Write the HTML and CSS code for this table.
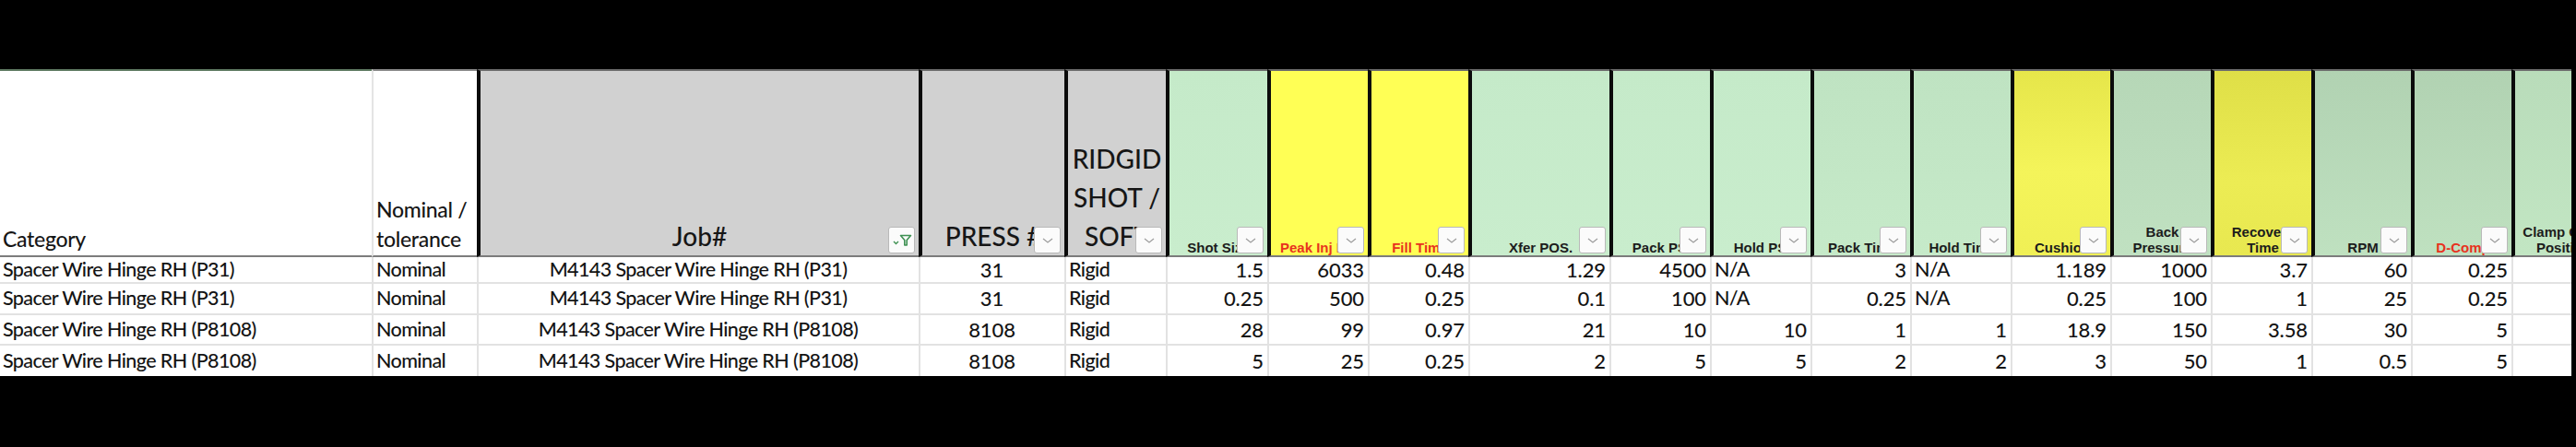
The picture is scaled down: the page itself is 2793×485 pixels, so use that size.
FILE: index.html
```html
<!DOCTYPE html>
<html lang="en">
<head>
<meta charset="utf-8">
<title>Process sheet</title>
<link rel="stylesheet" href="styles.css">
</head>
<body>
<div class="sheet">
  <div class="grid">
    <!-- header row -->
    <div class="h white cat"><span class="t23">Category</span></div>
    <div class="h white nom"><span class="t23">Nominal /<br>tolerance</span></div>
    <div class="h col gray"><span class="big">Job#</span>
      <span class="dd"><svg width="24" height="16" viewBox="0 0 24 16"><polyline points="3,9 5.5,11.5 8,9" fill="none" stroke="#3f9153" stroke-width="1.4"/><path d="M10.5 2.5 H21.5 L17.2 7.5 V13 H14.8 V7.5 Z" fill="none" stroke="#3f9153" stroke-width="1.6" stroke-linejoin="round"/></svg></span></div>
    <div class="h col gray"><span class="big">PRESS #</span><span class="dd"><svg class="chev" width="12" height="6" viewBox="0 0 12 6"><polyline points="1,1 6,5 11,1"/></svg></span></div>
    <div class="h col gray"><span class="big">RIDGID<br>SHOT /<br>SOFT</span><span class="dd"><svg class="chev" width="12" height="6" viewBox="0 0 12 6"><polyline points="1,1 6,5 11,1"/></svg></span></div>
    <div class="h col gA"><span class="lbl">Shot Size</span><span class="dd"><svg class="chev" width="12" height="6" viewBox="0 0 12 6"><polyline points="1,1 6,5 11,1"/></svg></span></div>
    <div class="h col yA"><span class="lbl red">Peak Inj PSI</span><span class="dd"><svg class="chev" width="12" height="6" viewBox="0 0 12 6"><polyline points="1,1 6,5 11,1"/></svg></span></div>
    <div class="h col yA"><span class="lbl red">Fill Time</span><span class="dd"><svg class="chev" width="12" height="6" viewBox="0 0 12 6"><polyline points="1,1 6,5 11,1"/></svg></span></div>
    <div class="h col gA"><span class="lbl">Xfer POS.</span><span class="dd"><svg class="chev" width="12" height="6" viewBox="0 0 12 6"><polyline points="1,1 6,5 11,1"/></svg></span></div>
    <div class="h col gA"><span class="lbl">Pack PSI</span><span class="dd"><svg class="chev" width="12" height="6" viewBox="0 0 12 6"><polyline points="1,1 6,5 11,1"/></svg></span></div>
    <div class="h col gA"><span class="lbl">Hold PSI</span><span class="dd"><svg class="chev" width="12" height="6" viewBox="0 0 12 6"><polyline points="1,1 6,5 11,1"/></svg></span></div>
    <div class="h col gB"><span class="lbl">Pack Time</span><span class="dd"><svg class="chev" width="12" height="6" viewBox="0 0 12 6"><polyline points="1,1 6,5 11,1"/></svg></span></div>
    <div class="h col gB"><span class="lbl">Hold Time</span><span class="dd"><svg class="chev" width="12" height="6" viewBox="0 0 12 6"><polyline points="1,1 6,5 11,1"/></svg></span></div>
    <div class="h col yB"><span class="lbl">Cushion</span><span class="dd"><svg class="chev" width="12" height="6" viewBox="0 0 12 6"><polyline points="1,1 6,5 11,1"/></svg></span></div>
    <div class="h col gC"><span class="lbl">Back<br>Pressure</span><span class="dd"><svg class="chev" width="12" height="6" viewBox="0 0 12 6"><polyline points="1,1 6,5 11,1"/></svg></span></div>
    <div class="h col yC"><span class="lbl">Recovery<br>Time</span><span class="dd"><svg class="chev" width="12" height="6" viewBox="0 0 12 6"><polyline points="1,1 6,5 11,1"/></svg></span></div>
    <div class="h col gD"><span class="lbl">RPM</span><span class="dd"><svg class="chev" width="12" height="6" viewBox="0 0 12 6"><polyline points="1,1 6,5 11,1"/></svg></span></div>
    <div class="h col gD"><span class="lbl red">D-Comp</span><span class="dd"><svg class="chev" width="12" height="6" viewBox="0 0 12 6"><polyline points="1,1 6,5 11,1"/></svg></span></div>
    <div class="h col gE"><span class="lbl">Clamp Open<br>Position</span><span class="dd"><svg class="chev" width="12" height="6" viewBox="0 0 12 6"><polyline points="1,1 6,5 11,1"/></svg></span></div>

    <!-- row 1 -->
    <div class="d first">Spacer Wire Hinge RH (P31)</div>
    <div class="d">Nominal</div>
    <div class="d ctr">M4143 Spacer Wire Hinge RH (P31)</div>
    <div class="d ctr num-c">31</div>
    <div class="d">Rigid</div>
    <div class="d num">1.5</div>
    <div class="d num">6033</div>
    <div class="d num">0.48</div>
    <div class="d num">1.29</div>
    <div class="d num">4500</div>
    <div class="d">N/A</div>
    <div class="d num">3</div>
    <div class="d">N/A</div>
    <div class="d num">1.189</div>
    <div class="d num">1000</div>
    <div class="d num">3.7</div>
    <div class="d num">60</div>
    <div class="d num">0.25</div>
    <div class="d"></div>

    <!-- row 2 -->
    <div class="d first">Spacer Wire Hinge RH (P31)</div>
    <div class="d">Nominal</div>
    <div class="d ctr">M4143 Spacer Wire Hinge RH (P31)</div>
    <div class="d ctr num-c">31</div>
    <div class="d">Rigid</div>
    <div class="d num">0.25</div>
    <div class="d num">500</div>
    <div class="d num">0.25</div>
    <div class="d num">0.1</div>
    <div class="d num">100</div>
    <div class="d">N/A</div>
    <div class="d num">0.25</div>
    <div class="d">N/A</div>
    <div class="d num">0.25</div>
    <div class="d num">100</div>
    <div class="d num">1</div>
    <div class="d num">25</div>
    <div class="d num">0.25</div>
    <div class="d"></div>

    <!-- row 3 -->
    <div class="d first">Spacer Wire Hinge RH (P8108)</div>
    <div class="d">Nominal</div>
    <div class="d ctr">M4143 Spacer Wire Hinge RH (P8108)</div>
    <div class="d ctr num-c">8108</div>
    <div class="d">Rigid</div>
    <div class="d num">28</div>
    <div class="d num">99</div>
    <div class="d num">0.97</div>
    <div class="d num">21</div>
    <div class="d num">10</div>
    <div class="d num">10</div>
    <div class="d num">1</div>
    <div class="d num">1</div>
    <div class="d num">18.9</div>
    <div class="d num">150</div>
    <div class="d num">3.58</div>
    <div class="d num">30</div>
    <div class="d num">5</div>
    <div class="d"></div>

    <!-- row 4 -->
    <div class="d first last">Spacer Wire Hinge RH (P8108)</div>
    <div class="d last">Nominal</div>
    <div class="d ctr last">M4143 Spacer Wire Hinge RH (P8108)</div>
    <div class="d ctr num-c last">8108</div>
    <div class="d last">Rigid</div>
    <div class="d num last">5</div>
    <div class="d num last">25</div>
    <div class="d num last">0.25</div>
    <div class="d num last">2</div>
    <div class="d num last">5</div>
    <div class="d num last">5</div>
    <div class="d num last">2</div>
    <div class="d num last">2</div>
    <div class="d num last">3</div>
    <div class="d num last">50</div>
    <div class="d num last">1</div>
    <div class="d num last">0.5</div>
    <div class="d num last">5</div>
    <div class="d last"></div>
  </div>
</div>
</body>
</html>
```

FILE: styles.css
```css
html, body {
  margin: 0;
  padding: 0;
  background: #000;
}

body {
  width: 2793px;
  height: 485px;
  overflow: hidden;
}

.sheet {
  padding-top: 75px;
  width: 2788px;
  overflow: hidden;
}

.grid {
  display: grid;
  grid-template-columns: 403px 114px 479px 158px 110px 110px 109px 109px 153px 109px 109px 108px 109px 108px 109px 109px 108px 109px 109px;
  grid-template-rows: 204px 29px 34px 33px 33px;
  width: 2832px;
  background: #fff;
}

/* ---------- header cells ---------- */
.h {
  position: relative;
  box-sizing: border-box;
  border-top: 2px solid #6c6c6c;
  border-bottom: 2px solid #7c7c7c;
  display: flex;
  flex-direction: column;
  justify-content: flex-end;
  overflow: hidden;
}

.white { background: #fff; }
.cat { border-top-color: #5f7a62; }
.nom { border-left: 2px solid #e4e4e4; border-top-color: #8a8a8a; }

.col { border-left: 4px solid #0b0b0b; }

.gray { background: #d1d1d1; }
.gA { background: linear-gradient(180deg, #c5eac9 0%, #c9edcd 100%); }
.gB { background: linear-gradient(180deg, #bfe3c2 0%, #c6eac9 100%); }
.gC { background: linear-gradient(180deg, #b6d7b7 0%, #c0e1c1 100%); }
.gD { background: linear-gradient(180deg, #b1d2b2 0%, #bfe1c0 100%); }
.gE { background: linear-gradient(180deg, #b9dcba 0%, #c2e6c3 100%); }
.yA { background: #ffff55; }
.yB { background: linear-gradient(180deg, #e6e64a 0%, #f4f45a 55%, #f0f055 100%); }
.yC { background: linear-gradient(180deg, #dfdf47 0%, #ecec54 60%, #e8e850 100%); }

.t23 {
  font-family: "Lato", "Liberation Sans", sans-serif;
  font-weight: 500;
  font-size: 23px;
  line-height: 32px;
  letter-spacing: -0.3px;
  color: #161616;
  padding: 0 0 2px 3px;
}

.big {
  font-family: "Lato", "Liberation Sans", sans-serif;
  font-weight: 500;
  font-size: 28px;
  line-height: 42px;
  color: #161616;
  text-align: center;
  white-space: nowrap;
}

.lbl {
  font-family: "Liberation Sans", Arial, sans-serif;
  font-weight: bold;
  font-size: 15px;
  line-height: 17px;
  color: #1c1c1c;
  text-align: center;
  white-space: nowrap;
  padding-bottom: 0;
}

.red { color: #e8321e; }

/* filter dropdown buttons */
.dd {
  position: absolute;
  right: 4px;
  bottom: 2px;
  width: 29px;
  height: 29px;
  box-sizing: border-box;
  background: #fbfbfb;
  border: 1px solid #b9b9b9;
  border-radius: 3px;
  display: flex;
  align-items: center;
  justify-content: center;
  z-index: 2;
}

.chev polyline {
  fill: none;
  stroke: #9c9c9c;
  stroke-width: 1.2;
}

/* ---------- data cells ---------- */
.d {
  box-sizing: border-box;
  font-family: "Lato", "Liberation Sans", sans-serif;
  font-weight: 500;
  font-size: 21.5px;
  line-height: 1;
  letter-spacing: -0.6px;
  color: #141414;
  background: #fff;
  display: flex;
  align-items: center;
  justify-content: flex-start;
  padding: 0 4px 0 3px;
  border-left: 2px solid #e2e2e2;
  border-bottom: 2px solid #e2e2e2;
  white-space: nowrap;
  overflow: hidden;
}

.d.first { border-left: none; }
.d.last { border-bottom: none; }
.num { justify-content: flex-end; }
.ctr { justify-content: center; }
.num, .num-c {
  font-size: 22px;
  letter-spacing: -0.1px;
}
```
